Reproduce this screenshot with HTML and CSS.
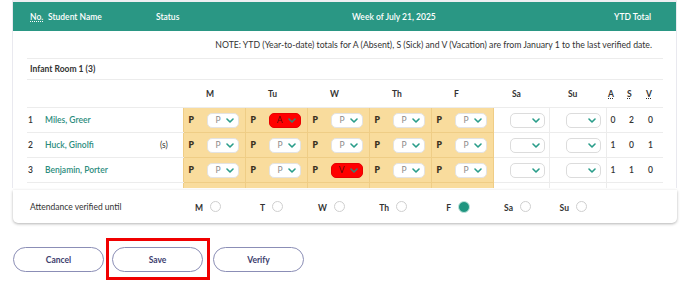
FILE: index.html
```html
<!DOCTYPE html>
<html lang="en">
<head>
    <meta charset="UTF-8">
    <meta name="viewport" content="width=device-width, initial-scale=1.0">
    <title>Weekly Attendance</title>
    <link rel="stylesheet" href="styles.css">
</head>
<body>
    <div class="sheet">
        <div class="sheet-head">
            <span class="h-no"><abbr>No.</abbr></span>
            <span class="h-name">Student Name</span>
            <span class="h-status">Status</span>
            <span class="h-week">Week of July 21, 2025</span>
            <span class="h-ytd">YTD Total</span>
        </div>
        <div class="sheet-body">
            <div class="note">NOTE: YTD (Year-to-date) totals for A (Absent), S (Sick) and V (Vacation) are from January 1 to the last verified date.</div>
            <div class="group-title">Infant Room 1 (3)</div>

            <table class="att-table">
                <colgroup>
                    <col style="width:18px"><col style="width:105px"><col style="width:33px">
                    <col style="width:62px"><col style="width:62px"><col style="width:62px"><col style="width:62px"><col style="width:62px">
                    <col style="width:56px"><col style="width:57px">
                    <col style="width:19px"><col style="width:19px"><col style="width:19px">
                </colgroup>
                <thead>
                    <tr>
                        <th></th><th></th><th></th>
                        <th class="day">M</th><th class="day">Tu</th><th class="day">W</th><th class="day">Th</th><th class="day">F</th>
                        <th class="wkend">Sa</th><th class="wkend">Su</th>
                        <th class="ytd"><abbr>A</abbr></th><th class="ytd"><abbr>S</abbr></th><th class="ytd"><abbr>V</abbr></th>
                    </tr>
                </thead>
                <tbody>
                    <tr>
                        <td class="no">1</td>
                        <td class="name"><a href="#">Miles, Greer</a></td>
                        <td class="status"></td>
                        <td class="cell"><div class="cell-in"><b>P</b><span class="sel">P<svg class="chev" viewBox="0 0 8 5"><path d="M1 1 L4 4 L7 1"/></svg></span></div></td>
                        <td class="cell"><div class="cell-in"><b>P</b><span class="sel red">A<svg class="chev" viewBox="0 0 8 5"><path d="M1 1 L4 4 L7 1"/></svg></span></div></td>
                        <td class="cell"><div class="cell-in"><b>P</b><span class="sel">P<svg class="chev" viewBox="0 0 8 5"><path d="M1 1 L4 4 L7 1"/></svg></span></div></td>
                        <td class="cell"><div class="cell-in"><b>P</b><span class="sel">P<svg class="chev" viewBox="0 0 8 5"><path d="M1 1 L4 4 L7 1"/></svg></span></div></td>
                        <td class="cell"><div class="cell-in"><b>P</b><span class="sel">P<svg class="chev" viewBox="0 0 8 5"><path d="M1 1 L4 4 L7 1"/></svg></span></div></td>
                        <td class="wk"><span class="sel empty"><svg class="chev" viewBox="0 0 8 5"><path d="M1 1 L4 4 L7 1"/></svg></span></td>
                        <td class="wk"><span class="sel empty"><svg class="chev" viewBox="0 0 8 5"><path d="M1 1 L4 4 L7 1"/></svg></span></td>
                        <td class="num">0</td><td class="num">2</td><td class="num">0</td>
                    </tr>
                    <tr>
                        <td class="no">2</td>
                        <td class="name"><a href="#">Huck, Ginolfi</a></td>
                        <td class="status">(s)</td>
                        <td class="cell"><div class="cell-in"><b>P</b><span class="sel">P<svg class="chev" viewBox="0 0 8 5"><path d="M1 1 L4 4 L7 1"/></svg></span></div></td>
                        <td class="cell"><div class="cell-in"><b>P</b><span class="sel">P<svg class="chev" viewBox="0 0 8 5"><path d="M1 1 L4 4 L7 1"/></svg></span></div></td>
                        <td class="cell"><div class="cell-in"><b>P</b><span class="sel">P<svg class="chev" viewBox="0 0 8 5"><path d="M1 1 L4 4 L7 1"/></svg></span></div></td>
                        <td class="cell"><div class="cell-in"><b>P</b><span class="sel">P<svg class="chev" viewBox="0 0 8 5"><path d="M1 1 L4 4 L7 1"/></svg></span></div></td>
                        <td class="cell"><div class="cell-in"><b>P</b><span class="sel">P<svg class="chev" viewBox="0 0 8 5"><path d="M1 1 L4 4 L7 1"/></svg></span></div></td>
                        <td class="wk"><span class="sel empty"><svg class="chev" viewBox="0 0 8 5"><path d="M1 1 L4 4 L7 1"/></svg></span></td>
                        <td class="wk"><span class="sel empty"><svg class="chev" viewBox="0 0 8 5"><path d="M1 1 L4 4 L7 1"/></svg></span></td>
                        <td class="num">1</td><td class="num">0</td><td class="num">1</td>
                    </tr>
                    <tr>
                        <td class="no">3</td>
                        <td class="name"><a href="#">Benjamin, Porter</a></td>
                        <td class="status"></td>
                        <td class="cell"><div class="cell-in"><b>P</b><span class="sel">P<svg class="chev" viewBox="0 0 8 5"><path d="M1 1 L4 4 L7 1"/></svg></span></div></td>
                        <td class="cell"><div class="cell-in"><b>P</b><span class="sel">P<svg class="chev" viewBox="0 0 8 5"><path d="M1 1 L4 4 L7 1"/></svg></span></div></td>
                        <td class="cell"><div class="cell-in"><b>P</b><span class="sel red">V<svg class="chev" viewBox="0 0 8 5"><path d="M1 1 L4 4 L7 1"/></svg></span></div></td>
                        <td class="cell"><div class="cell-in"><b>P</b><span class="sel">P<svg class="chev" viewBox="0 0 8 5"><path d="M1 1 L4 4 L7 1"/></svg></span></div></td>
                        <td class="cell"><div class="cell-in"><b>P</b><span class="sel">P<svg class="chev" viewBox="0 0 8 5"><path d="M1 1 L4 4 L7 1"/></svg></span></div></td>
                        <td class="wk"><span class="sel empty"><svg class="chev" viewBox="0 0 8 5"><path d="M1 1 L4 4 L7 1"/></svg></span></td>
                        <td class="wk"><span class="sel empty"><svg class="chev" viewBox="0 0 8 5"><path d="M1 1 L4 4 L7 1"/></svg></span></td>
                        <td class="num">1</td><td class="num">1</td><td class="num">0</td>
                    </tr>
                    <tr>
                        <td class="no"></td><td class="name"></td><td class="status"></td>
                        <td class="cell"></td><td class="cell"></td><td class="cell"></td><td class="cell"></td><td class="cell"></td>
                        <td class="wk"></td><td class="wk"></td>
                        <td class="num"></td><td class="num"></td><td class="num"></td>
                    </tr>
                </tbody>
            </table>
        </div>
    </div>

    <!-- verified until bar, sticks under the table -->
    <div class="verify-bar">
        <div class="verify-label">Attendance verified until</div>
        <label class="vday"><span>M</span><i class="radio"></i></label>
        <label class="vday"><span>T</span><i class="radio"></i></label>
        <label class="vday"><span>W</span><i class="radio"></i></label>
        <label class="vday"><span>Th</span><i class="radio"></i></label>
        <label class="vday"><span>F</span><i class="radio checked"></i></label>
        <label class="vday"><span>Sa</span><i class="radio"></i></label>
        <label class="vday"><span>Su</span><i class="radio"></i></label>
    </div>

    <div class="actions">
        <button class="btn">Cancel</button>
        <div class="save-wrap">
            <button class="btn">Save</button>
        </div>
        <button class="btn">Verify</button>
    </div>
</body>
</html>
```

FILE: styles.css
```css
/* General styling */
body {
    font-family: Lato, 'Open Sans', sans-serif;
    font-size: 8.5px;
    color: #333;
    background-color: #fff;
    margin: 0;
    padding: 0;
    min-height: 100vh;
}

abbr {
    text-decoration: underline dotted;
    text-underline-offset: 1px;
}

.sheet {
    margin-left: 12px;
    width: 663px;
    height: 186px;
    border: 1px solid #e9e9ef;
    border-top: 2px solid #eeeef2;
    border-bottom: none;
    overflow: hidden;
}

.sheet-head {
    display: flex;
    align-items: center;
    height: 29px;
    padding-left: 17px;
    background-color: #2a9784;
    color: #fff;
    font-weight: 600;
}

.h-no { width: 18px; }
.h-name { width: 108px; }
.h-status { width: 196px; }
.h-week { width: 262px; }

.sheet-body {
    padding: 0 13px 0 14px;
}

.note {
    height: 27px;
    line-height: 27px;
    text-align: right;
    padding-right: 11px;
    font-size: 8.7px;
    border-bottom: 1px solid #ececec;
}

.group-title {
    height: 20px;
    line-height: 20px;
    padding-left: 3px;
    font-weight: 700;
    border-bottom: 1px solid #ececec;
}

/* Attendance table */
.att-table {
    width: 636px;
    table-layout: fixed;
    border-collapse: collapse;
}

.att-table th {
    height: 27px;
    padding: 0;
    font-weight: 700;
    text-align: left;
    border-bottom: 1px solid #ececec;
}

.att-table th.day { padding-left: 23px; }
.att-table th.wkend { padding-left: 19px; }
.att-table th.ytd { padding-left: 2px; }

.att-table td {
    height: 24px;
    padding: 0;
    border-bottom: 1px solid #ececec;
}

.no { padding-left: 1px !important; font-weight: 600; }

.name a {
    color: #2b8c7d;
    font-weight: 600;
    text-decoration: none;
}

.status { padding-left: 10px !important; }

.att-table td.cell {
    background-color: #f9dc9d;
    border: 1px solid #efcd86;
    border-top: none;
}

.cell-in {
    display: flex;
    align-items: center;
    padding-left: 5px;
}

.cell-in b {
    width: 18px;
    font-weight: 800;
    color: #3a3020;
}

.att-table td.wk {
    padding-left: 16px;
    border-right: 1px solid #ececec;
}

.num {
    padding-left: 4px !important;
    font-weight: 600;
}

/* fake select boxes */
.sel {
    display: inline-flex;
    align-items: center;
    justify-content: flex-end;
    gap: 5px;
    box-sizing: border-box;
    width: 32px;
    height: 15px;
    padding-right: 4px;
    background-color: #fff;
    border: 1px solid #e3e3e3;
    border-radius: 5px;
    color: #8a8a8a;
    vertical-align: middle;
}

.sel.red {
    background-color: #ff0000;
    border-color: #e80000;
    color: #5a0d0d;
}

.sel.red .chev { stroke: #3d7f70; }

.sel.empty {
    width: 35px;
    border-color: #dcdcdc;
}

.chev {
    width: 8px;
    height: 5px;
    fill: none;
    stroke: #2a9d8a;
    stroke-width: 1.6;
    stroke-linecap: round;
    stroke-linejoin: round;
}

/* Verified until bar */
.verify-bar {
    display: grid;
    grid-template-columns: 170px 62px 62px 62px 62px 62px 56px 57px;
    align-items: center;
    box-sizing: border-box;
    margin: 2px 0 0 13px;
    width: 664px;
    height: 33px;
    background-color: #fff;
    border-radius: 0 0 5px 5px;
    box-shadow: 0 1px 3px rgba(0, 0, 0, 0.3);
}

.verify-label {
    padding-left: 17px;
}

.vday {
    display: flex;
    align-items: center;
}

.vday span {
    width: 20px;
    text-align: right;
    font-weight: 700;
    margin-top: 2px;
}

.radio {
    box-sizing: border-box;
    width: 11px;
    height: 11px;
    margin-left: 7px;
    border: 1px solid #cfcfcf;
    border-radius: 50%;
    background-color: #fff;
}

.radio.checked {
    width: 12px;
    height: 12px;
    background-color: #1f9580;
    border: 1px solid #bfe3dc;
}

/* Button styling */
.actions {
    display: flex;
    align-items: center;
    gap: 9px;
    margin: 24px 0 0 13px;
}

.btn {
    display: block;
    box-sizing: border-box;
    width: 91px;
    height: 25px;
    background-color: #fff;
    border: 1.5px solid #8b8eb6;
    border-radius: 13px;
    color: #3d406e;
    font-family: Lato, 'Open Sans', sans-serif;
    font-size: 8.5px;
    font-weight: 700;
    cursor: pointer;
}

/* red box marking the Save button */
.save-wrap {
    margin: -9px -6px -8px -7px;
    padding: 6px 4px 5px 3px;
    border: 3px solid #f00000;
}
```
